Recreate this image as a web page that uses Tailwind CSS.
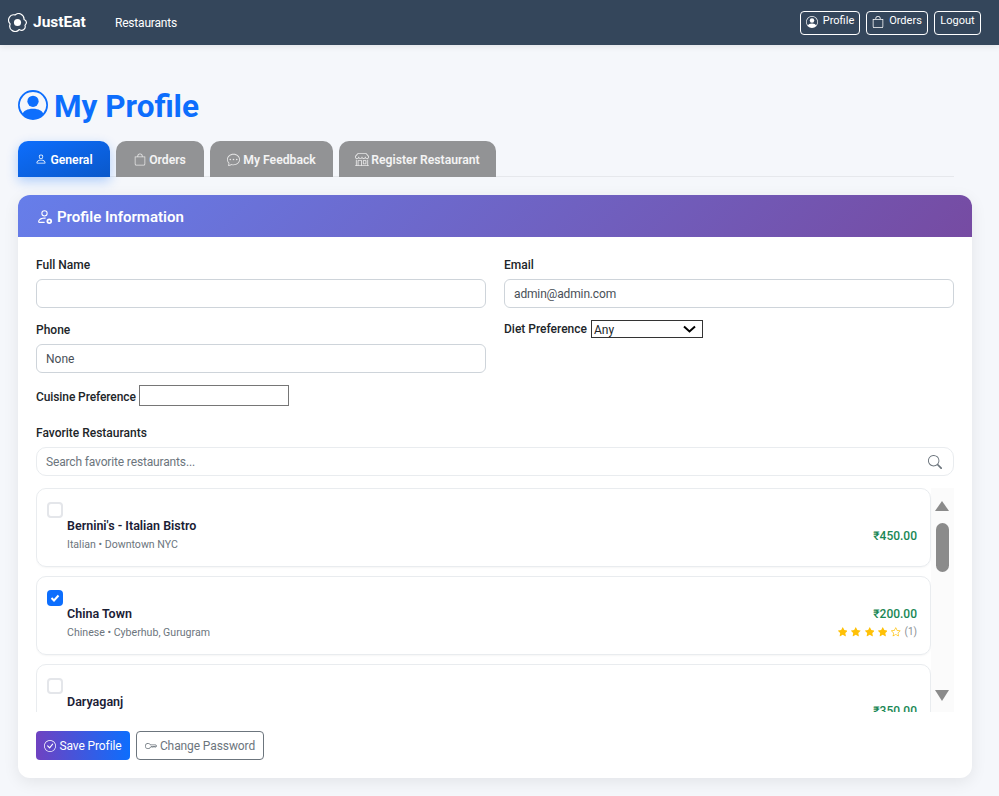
<!DOCTYPE html>
<html lang="en">
<head>
<meta charset="utf-8">
<title>My Profile</title>
<script src="https://cdn.jsdelivr.net/npm/@tailwindcss/browser@4"></script>
</head>
<body class="bg-[#f5f7fb] font-['Roboto','Noto_Sans',sans-serif] text-[#212529] h-[796px] overflow-hidden">
<nav class="h-[45px] bg-[#34465b] shadow-[0_2px_6px_rgba(0,0,0,0.08)] flex items-center pl-[8px] pr-[18px] text-white">
  <svg class="w-[19px] h-[19px]" viewBox="0 0 16 16" fill="white"><path d="M8 11a3 3 0 1 0 0-6 3 3 0 0 0 0 6"/><path d="M13.997 5.170a5 5 0 0 0-8.101-4.090A5 5 0 0 0 1.280 9.342a5 5 0 0 0 8.336 5.109 3.500 3.500 0 0 0 5.201-4.065 3.001 3.001 0 0 0-.822-5.216zm-1-.034a1 1 0 0 0 .668.977 2.001 2.001 0 0 1 .547 3.478 1 1 0 0 0-.341 1.113 2.500 2.500 0 0 1-3.715 2.905 1 1 0 0 0-1.262.152 4 4 0 0 1-6.670-4.087 1 1 0 0 0-.2-1 4 4 0 0 1 3.693-6.610 1 1 0 0 0 .8-.2 4 4 0 0 1 6.480 3.273z"/></svg>
  <span class="ml-[6px] text-[15.500px] font-bold w-[82px]">JustEat</span>
  <span class="text-[12px] tracking-[-0.2px]">Restaurants</span>
  <div class="ml-auto flex gap-[6px] text-[11px]">
    <span class="h-[24px] w-[60px] border border-white rounded-[4px] flex items-center justify-center gap-[5px] pb-[2px]"><svg class="w-[12px] h-[12px]" viewBox="0 0 16 16" fill="white"><path d="M11 6a3 3 0 1 1-6 0 3 3 0 0 1 6 0"/><path fill-rule="evenodd" d="M0 8a8 8 0 1 1 16 0A8 8 0 0 1 0 8m8-7a7 7 0 0 0-5.468 11.370C3.242 11.226 4.805 10 8 10s4.757 1.225 5.468 2.370A7 7 0 0 0 8 1"/></svg>Profile</span>
    <span class="h-[24px] w-[62px] border border-white rounded-[4px] flex items-center justify-center gap-[5px] pb-[2px]"><svg class="w-[12px] h-[12px]" viewBox="0 0 16 16" fill="white"><path d="M8 1a2.500 2.500 0 0 1 2.500 2.500V4h-5v-.5A2.500 2.500 0 0 1 8 1m3.500 3v-.5a3.500 3.500 0 1 0-7 0V4H1v10a2 2 0 0 0 2 2h10a2 2 0 0 0 2-2V4zM2 5h12v9a1 1 0 0 1-1 1H3a1 1 0 0 1-1-1z"/></svg>Orders</span>
    <span class="h-[24px] w-[47px] border border-white rounded-[4px] flex items-center justify-center pb-[2px]">Logout</span>
  </div>
</nav>

<main class="px-[18px] mx-0 w-[972px]">
  <h1 class="mt-[45px] h-[30px] flex items-center gap-[6px] text-[#0d6efd] text-[31.500px] font-bold leading-none">
    <svg class="w-[30px] h-[30px]" viewBox="0 0 16 16" fill="#0d6efd"><path d="M11 6a3 3 0 1 1-6 0 3 3 0 0 1 6 0"/><path fill-rule="evenodd" d="M0 8a8 8 0 1 1 16 0A8 8 0 0 1 0 8m8-7a7 7 0 0 0-5.468 11.370C3.242 11.226 4.805 10 8 10s4.757 1.225 5.468 2.370A7 7 0 0 0 8 1"/></svg>
    <span class="relative top-[2px]">My Profile</span>
  </h1>

  <div class="mt-[21px] h-[36px] flex gap-[6px] border-b border-[#e6e8ec] text-[12.200px] font-semibold text-white/90">
    <div class="w-[92px] h-[36px] pt-[2px] rounded-t-[10px] bg-gradient-to-br from-[#0d6efd] to-[#0a58ca] shadow-[0_4px_12px_rgba(13,110,253,0.3)] flex items-center justify-center gap-[3px] text-white">
      <svg class="w-[12px] h-[12px] relative -top-[1px]" viewBox="0 0 16 16" fill="white"><path d="M8 8a3 3 0 1 0 0-6 3 3 0 0 0 0 6m2-3a2 2 0 1 1-4 0 2 2 0 0 1 4 0m4 8c0 1-1 1-1 1H3s-1 0-1-1 1-4 6-4 6 3 6 4m-1-.004c-.001-.246-.154-.986-.832-1.664C11.516 10.680 10.289 10 8 10s-3.516.68-4.168 1.332c-.678.678-.83 1.418-.832 1.664z"/></svg>General</div>
    <div class="w-[88px] h-[36px] pt-[2px] rounded-t-[10px] bg-[#929395] flex items-center justify-center gap-[3px]">
      <svg class="w-[12px] h-[13px] relative -top-[1px]" viewBox="0 0 16 16" fill="#e8e8e8"><path d="M8 1a2.500 2.500 0 0 1 2.500 2.500V4h-5v-.5A2.500 2.500 0 0 1 8 1m3.500 3v-.5a3.500 3.500 0 1 0-7 0V4H1v10a2 2 0 0 0 2 2h10a2 2 0 0 0 2-2V4zM2 5h12v9a1 1 0 0 1-1 1H3a1 1 0 0 1-1-1z"/></svg>Orders</div>
    <div class="w-[123px] h-[36px] pt-[2px] rounded-t-[10px] bg-[#929395] flex items-center justify-center gap-[3px]">
      <svg class="w-[13px] h-[13px] relative -top-[1px]" viewBox="0 0 16 16" fill="#e8e8e8"><path d="M2.678 11.894a1 1 0 0 1 .287.801 11 11 0 0 1-.398 2c1.395-.323 2.247-.697 2.634-.893a1 1 0 0 1 .71-.074A8 8 0 0 0 8 14c3.996 0 7-2.807 7-6s-3.004-6-7-6-7 2.808-7 6c0 1.468.617 2.830 1.678 3.894m-.493 3.905a22 22 0 0 1-.713.129c-.2.032-.352-.176-.273-.362a10 10 0 0 0 .244-.637l.003-.01c.248-.72.450-1.548.524-2.319C.743 11.370 0 9.760 0 8c0-3.866 3.582-7 8-7s8 3.134 8 7-3.582 7-8 7a9 9 0 0 1-2.347-.306c-.52.263-1.639.742-3.468 1.105"/><path d="M5 8a1 1 0 1 1-2 0 1 1 0 0 1 2 0m4 0a1 1 0 1 1-2 0 1 1 0 0 1 2 0m3 1a1 1 0 1 0 0-2 1 1 0 0 0 0 2"/></svg>My Feedback</div>
    <div class="w-[157px] h-[36px] pt-[2px] rounded-t-[10px] bg-[#929395] flex items-center justify-center gap-[2px]">
      <svg class="w-[14px] h-[14px] relative -top-[1px]" viewBox="0 0 16 16" fill="#e8e8e8"><path d="M2.970 1.350A1 1 0 0 1 3.730 1h8.540a1 1 0 0 1 .760.350l2.609 3.044A1.500 1.500 0 0 1 16 5.370v.255a2.375 2.375 0 0 1-4.250 1.458A2.370 2.370 0 0 1 9.875 8 2.370 2.370 0 0 1 8 7.083 2.370 2.370 0 0 1 6.125 8a2.370 2.370 0 0 1-1.875-.917A2.375 2.375 0 0 1 0 5.625V5.370a1.500 1.500 0 0 1 .361-.976zm1.780 4.275a1.375 1.375 0 0 0 2.750 0 .5.5 0 0 1 1 0 1.375 1.375 0 0 0 2.750 0 .5.5 0 0 1 1 0 1.375 1.375 0 1 0 2.750 0V5.370a.500.500 0 0 0-.12-.325L12.270 2H3.730L1.120 5.045A.500.500 0 0 0 1 5.370v.255a1.375 1.375 0 0 0 2.750 0 .5.5 0 0 1 1 0M1.500 8.500A.500.500 0 0 1 2 9v6h1v-5a1 1 0 0 1 1-1h3a1 1 0 0 1 1 1v5h6V9a.500.500 0 0 1 1 0v6h.500a.500.500 0 0 1 0 1H.5a.500.500 0 0 1 0-1H1V9a.500.500 0 0 1 .500-.500M4 15h3v-5H4zm5-5a1 1 0 0 1 1-1h2a1 1 0 0 1 1 1v3a1 1 0 0 1-1 1h-2a1 1 0 0 1-1-1zm3 0h-2v3h2z"/></svg>Register Restaurant</div>
  </div>

  <section class="mt-[18px] w-[954px] h-[583px] bg-white rounded-[12px] shadow-[0_4px_16px_rgba(0,0,0,0.08)] overflow-hidden">
    <header class="h-[42px] bg-[linear-gradient(135deg,#667eea,#764ba2)] flex items-center gap-[4px] pl-[18px] text-white text-[15px] font-semibold">
      <svg class="w-[17px] h-[17px]" viewBox="0 0 16 16" fill="white"><path d="M11 5a3 3 0 1 1-6 0 3 3 0 0 1 6 0M8 7a2 2 0 1 0 0-4 2 2 0 0 0 0 4m.256 7a4.500 4.500 0 0 1-.229-1.004H3c.001-.246.154-.986.832-1.664C4.484 10.680 5.711 10 8 10q.39 0 .74.025c.226-.341.496-.650.804-.918Q8.844 9.002 8 9c-5 0-6 3-6 4s1 1 1 1z"/><circle cx="12.500" cy="12.500" r="2.600"/><circle cx="12.500" cy="12.500" r="1" fill="#667eea"/></svg>
      <span class="relative top-[1px]">Profile Information</span>
    </header>

    <div class="px-[18px]">
      <div class="grid grid-cols-2 gap-x-[18px] pt-[20px]">
        <div>
          <label class="block h-[22px] text-[12px] font-medium leading-[16px]">Full Name</label>
          <div class="h-[29px] border border-[#ced4da] rounded-[6px] bg-white"></div>
        </div>
        <div>
          <label class="block h-[22px] text-[12px] font-medium leading-[16px]">Email</label>
          <div class="h-[29px] border border-[#ced4da] rounded-[6px] bg-white flex items-center pl-[9px] pt-[1px] text-[12px] tracking-[-0.15px] text-[#495057]">admin@admin.com</div>
        </div>
        <div class="mt-[14px]">
          <label class="block h-[22px] text-[12px] font-medium leading-[16px]">Phone</label>
          <div class="h-[29px] border border-[#ced4da] rounded-[6px] bg-white flex items-center pl-[9px] pt-[1px] text-[12px] text-[#495057]">None</div>
        </div>
        <div class="mt-[12px] flex items-start h-[19px] text-[12px] font-medium">
          <span class="leading-[19px]">Diet Preference</span>
          <div class="ml-[4px] w-[112px] h-[18px] border border-[#333] flex items-center justify-between pl-[2px] pr-[6px] pt-[1px] font-normal text-[12px]">Any<svg class="w-[13px] h-[9px]" viewBox="0 0 13 9" fill="none" stroke="black" stroke-width="2"><path d="M1 1.500l5.500 5 5.500-5"/></svg></div>
        </div>
      </div>

      <div class="mt-[12px] h-[21px] flex items-center text-[12px] tracking-[-0.1px] font-medium">
        <span class="relative top-[1px]">Cuisine Preference</span>
        <div class="ml-[3px] w-[150px] h-[21px] border border-[#767676]"></div>
      </div>

      <label class="block mt-[19px] h-[22px] text-[12px] font-medium leading-[16px]">Favorite Restaurants</label>
      <div class="h-[29px] border border-[#e9ecef] rounded-[10px] flex items-center justify-between pl-[9px] pr-[11px] text-[12px] tracking-[-0.15px] text-[#6c757d]">
        Search favorite restaurants...
        <svg class="w-[14px] h-[14px]" viewBox="0 0 16 16" fill="#6c757d"><path d="M11.742 10.344a6.500 6.500 0 1 0-1.397 1.398h-.001q.044.060.098.115l3.850 3.850a1 1 0 0 0 1.415-1.414l-3.850-3.850a1 1 0 0 0-.115-.1zM12 6.500a5.500 5.500 0 1 1-11 0 5.500 5.500 0 0 1 11 0"/></svg>
      </div>

      <div class="mt-[12px] h-[224px] flex overflow-hidden">
        <div class="w-[895px] flex flex-col gap-[9px]">
          <div class="h-[79px] shrink-0 border border-[#e9ecef] rounded-[10px] shadow-[0_1px_2px_rgba(0,0,0,0.04)] pl-[10px] pr-[13px] pt-[13px] relative">
            <div class="w-[16px] h-[16px] border-2 border-[#e4e6ea] rounded-[4px]"></div>
            <div class="flex justify-between -mt-[2px] pl-[20px]">
              <div>
                <div class="text-[12.500px] font-semibold leading-[20px] text-[#1a2035]">Bernini's - Italian Bistro</div>
                <div class="text-[10.600px] leading-[16px] mt-[1px] text-[#6c757d]">Italian • Downtown NYC</div>
              </div>
              <div class="text-[12px] font-medium text-[#198754] leading-[20px] mt-[10px]">₹450.00</div>
            </div>
          </div>
          <div class="h-[79px] shrink-0 border border-[#e9ecef] rounded-[10px] shadow-[0_1px_2px_rgba(0,0,0,0.04)] pl-[10px] pr-[13px] pt-[13px]">
            <div class="w-[16px] h-[16px] bg-[#0d6efd] rounded-[4px] flex items-center justify-center"><svg class="w-[10px] h-[10px]" viewBox="0 0 10 10" fill="none" stroke="white" stroke-width="2"><path d="M1.500 5l2.500 2.500 4.500-5"/></svg></div>
            <div class="flex justify-between -mt-[2px] pl-[20px]">
              <div>
                <div class="text-[12.500px] font-semibold leading-[20px] text-[#1a2035]">China Town</div>
                <div class="text-[10.600px] leading-[16px] mt-[1px] text-[#6c757d]">Chinese • Cyberhub, Gurugram</div>
              </div>
              <div class="text-right">
                <div class="text-[12px] font-medium text-[#198754] leading-[20px]">₹200.00</div>
                <div class="flex items-center justify-end gap-[3.800px] text-[10px] text-[#8a8f94] leading-[16px]">
                  <svg class="w-[9.500px] h-[9.500px]" viewBox="0 0 16 16" fill="#ffc107"><path d="M3.612 15.443c-.386.198-.824-.149-.746-.592l.830-4.730L.173 6.765c-.329-.314-.158-.888.283-.950l4.898-.696L7.538.792c.197-.390.730-.390.927 0l2.184 4.327 4.898.696c.441.062.612.636.282.950l-3.522 3.356.830 4.730c.078.443-.360.790-.746.592L8 13.187z"/></svg>
                  <svg class="w-[9.500px] h-[9.500px]" viewBox="0 0 16 16" fill="#ffc107"><path d="M3.612 15.443c-.386.198-.824-.149-.746-.592l.830-4.730L.173 6.765c-.329-.314-.158-.888.283-.950l4.898-.696L7.538.792c.197-.390.730-.390.927 0l2.184 4.327 4.898.696c.441.062.612.636.282.950l-3.522 3.356.830 4.730c.078.443-.360.790-.746.592L8 13.187z"/></svg>
                  <svg class="w-[9.500px] h-[9.500px]" viewBox="0 0 16 16" fill="#ffc107"><path d="M3.612 15.443c-.386.198-.824-.149-.746-.592l.830-4.730L.173 6.765c-.329-.314-.158-.888.283-.950l4.898-.696L7.538.792c.197-.390.730-.390.927 0l2.184 4.327 4.898.696c.441.062.612.636.282.950l-3.522 3.356.830 4.730c.078.443-.360.790-.746.592L8 13.187z"/></svg>
                  <svg class="w-[9.500px] h-[9.500px]" viewBox="0 0 16 16" fill="#ffc107"><path d="M3.612 15.443c-.386.198-.824-.149-.746-.592l.830-4.730L.173 6.765c-.329-.314-.158-.888.283-.950l4.898-.696L7.538.792c.197-.390.730-.390.927 0l2.184 4.327 4.898.696c.441.062.612.636.282.950l-3.522 3.356.830 4.730c.078.443-.360.790-.746.592L8 13.187z"/></svg>
                  <svg class="w-[9.500px] h-[9.500px]" viewBox="0 0 16 16" fill="#ffc107"><path d="M2.866 14.850c-.078.444.360.791.746.593l4.390-2.256 4.389 2.256c.386.198.824-.149.746-.592l-.830-4.730 3.522-3.356c.330-.314.160-.888-.282-.950l-4.898-.696L8.465.792a.513.513 0 0 0-.927 0L5.354 5.120l-4.898.696c-.441.062-.612.636-.283.950l3.523 3.356-.830 4.730zm4.905-2.767-3.686 1.894.694-3.957a.560.560 0 0 0-.163-.505L1.710 6.745l4.052-.576a.530.530 0 0 0 .393-.288L8 2.223l1.847 3.658a.530.530 0 0 0 .393.288l4.052.575-2.906 2.770a.560.560 0 0 0-.163.506l.694 3.957-3.686-1.894a.500.500 0 0 0-.461 0z"/></svg>
                  <span>(1)</span>
                </div>
              </div>
            </div>
          </div>
          <div class="h-[79px] shrink-0 border border-[#e9ecef] rounded-[10px] shadow-[0_1px_2px_rgba(0,0,0,0.04)] pl-[10px] pr-[13px] pt-[13px]">
            <div class="w-[16px] h-[16px] border-2 border-[#e4e6ea] rounded-[4px]"></div>
            <div class="flex justify-between -mt-[2px] pl-[20px]">
              <div class="text-[12.500px] font-semibold leading-[20px] text-[#1a2035]">Daryaganj</div>
              <div class="text-[12px] font-medium text-[#198754] leading-[20px] mt-[9px]">₹350.00</div>
            </div>
          </div>
        </div>
        <div class="w-[23px] bg-[#fbfbfb] flex flex-col items-center pt-[13px] pr-[1px]">
          <div class="w-0 h-0 border-x-[7px] border-x-transparent border-b-[10px] border-b-[#8b8b8b]"></div>
          <div class="mt-[12px] w-[13px] h-[49px] rounded-full bg-[#8b8b8b]"></div>
          <div class="mt-[118px] w-0 h-0 border-x-[7px] border-x-transparent border-t-[11px] border-t-[#8b8b8b]"></div>
        </div>
      </div>

      <div class="mt-[19px] flex gap-[6px] text-[12px] tracking-[-0.1px]">
        <div class="w-[94px] h-[29px] pt-[1px] rounded-[4px] bg-[linear-gradient(90deg,#6f42c1,#0d6efd)] text-white flex items-center justify-center gap-[3px]">
          <svg class="w-[12px] h-[12px]" viewBox="0 0 16 16" fill="white"><path d="M8 15A7 7 0 1 1 8 1a7 7 0 0 1 0 14m0 1A8 8 0 1 0 8 0a8 8 0 0 0 0 16"/><path d="m10.970 4.970-.020.022-3.473 4.425-2.093-2.094a.750.750 0 0 0-1.060 1.060L6.970 11.030a.750.750 0 0 0 1.079-.020l3.992-4.990a.750.750 0 0 0-1.071-1.050"/></svg>Save Profile</div>
        <div class="w-[128px] h-[29px] pt-[1px] rounded-[4px] border border-[#6c757d] text-[#6c757d] flex items-center justify-center gap-[3px]">
          <svg class="w-[12px] h-[12px]" viewBox="0 0 16 16" fill="#6c757d"><path d="M0 8a4 4 0 0 1 7.465-2H14a.500.500 0 0 1 .354.146l1.500 1.500a.500.500 0 0 1 0 .708l-1.500 1.500a.500.500 0 0 1-.708 0L13 9.207l-.646.647a.500.500 0 0 1-.708 0L11 9.207l-.646.647a.500.500 0 0 1-.708 0L9 9.207l-.646.647A.500.500 0 0 1 8 10h-.535A4 4 0 0 1 0 8m4-3a3 3 0 1 0 2.712 4.285A.500.500 0 0 1 7.163 9h.630l.853-.854a.500.500 0 0 1 .708 0l.646.647.646-.647a.500.500 0 0 1 .708 0l.646.647.646-.647a.500.500 0 0 1 .708 0l.646.647.793-.793-1-1h-6.630a.500.500 0 0 1-.451-.285A3 3 0 0 0 4 5"/></svg>Change Password</div>
      </div>
    </div>
  </section>
</main>
</body>
</html>
